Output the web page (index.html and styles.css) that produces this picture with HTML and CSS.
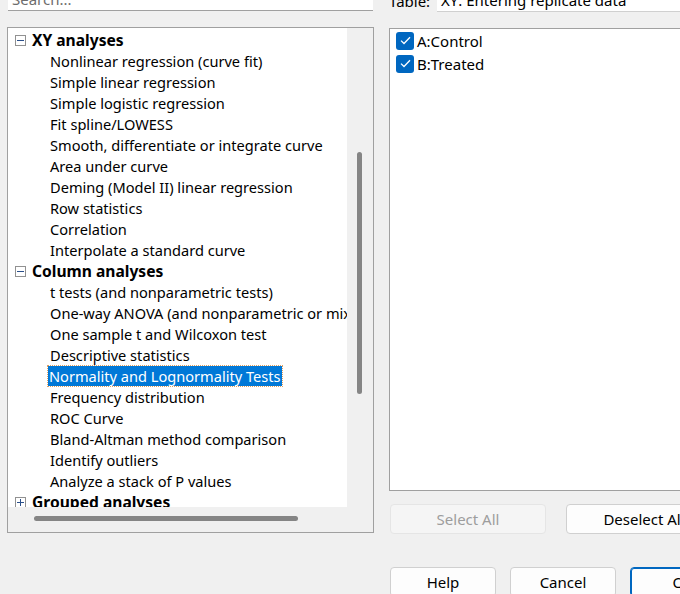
FILE: index.html
```html
<!DOCTYPE html>
<html lang="en">
  <head>
    <meta charset="UTF-8" />
    <title>Analyze Data</title>
    <link rel="stylesheet" href="styles.css">
  </head>
  <body>
    <div class="dialog">
      <div class="left-col">
        <div class="search-box">Search...</div>

        <div class="tree-panel">
          <div class="tree-view">
            <div class="tree-group">
              <span class="expander minus"></span>XY analyses
            </div>
            <div class="tree-item">Nonlinear regression (curve fit)</div>
            <div class="tree-item">Simple linear regression</div>
            <div class="tree-item">Simple logistic regression</div>
            <div class="tree-item">Fit spline/LOWESS</div>
            <div class="tree-item">Smooth, differentiate or integrate curve</div>
            <div class="tree-item">Area under curve</div>
            <div class="tree-item">Deming (Model II) linear regression</div>
            <div class="tree-item">Row statistics</div>
            <div class="tree-item">Correlation</div>
            <div class="tree-item">Interpolate a standard curve</div>
            <div class="tree-group">
              <span class="expander minus"></span>Column analyses
            </div>
            <div class="tree-item">t tests (and nonparametric tests)</div>
            <div class="tree-item">One-way ANOVA (and nonparametric or mixed)</div>
            <div class="tree-item">One sample t and Wilcoxon test</div>
            <div class="tree-item">Descriptive statistics</div>
            <div class="tree-item"><span class="selected">Normality and Lognormality Tests</span></div>
            <div class="tree-item">Frequency distribution</div>
            <div class="tree-item">ROC Curve</div>
            <div class="tree-item">Bland-Altman method comparison</div>
            <div class="tree-item">Identify outliers</div>
            <div class="tree-item">Analyze a stack of P values</div>
            <div class="tree-group">
              <span class="expander plus"></span>Grouped analyses
            </div>
          </div>
          <div class="vscroll">
            <div class="vthumb"></div>
          </div>
          <div class="hscroll">
            <div class="hthumb"></div>
          </div>
          <div class="corner"></div>
        </div>
      </div>

      <div class="right-col">
        <div class="table-row">
          <span class="table-label">Table:</span>
          <div class="table-field">XY: Entering replicate data</div>
        </div>

        <div class="dataset-list">
          <label class="check-row">
            <span class="checkbox">
              <svg width="11" height="9" viewBox="0 0 11 9">
                <path d="M1 4.6 L4 7.5 L10 1.3" fill="none" stroke="#fff" stroke-width="1.3" />
              </svg>
            </span>
            A:Control
          </label>
          <label class="check-row">
            <span class="checkbox">
              <svg width="11" height="9" viewBox="0 0 11 9">
                <path d="M1 4.6 L4 7.5 L10 1.3" fill="none" stroke="#fff" stroke-width="1.3" />
              </svg>
            </span>
            B:Treated
          </label>
        </div>

        <div class="select-buttons">
          <button class="btn" disabled>Select All</button>
          <button class="btn">Deselect All</button>
        </div>

        <div class="dialog-buttons">
          <button class="btn">Help</button>
          <button class="btn">Cancel</button>
          <button class="btn default">OK</button>
        </div>
      </div>
    </div>
  </body>
</html>
```

FILE: styles.css
```css
body {
  margin: 0;
  padding: 0;
  width: 680px;
  height: 594px;
  overflow: hidden;
  background: #f0f0f0;
  font-family: 'Noto Sans', 'Open Sans', sans-serif;
  font-size: 14.6px;
  color: #000;
}

.dialog {
  display: flex;
  gap: 15px;
  padding-left: 7px;
  margin-top: -12px;
  width: 800px;
}

/* left column: search + tree */

.left-col {
  display: flex;
  flex-direction: column;
  gap: 16px;
  width: 367px;
  flex-shrink: 0;
}

.search-box {
  height: 23px;
  box-sizing: border-box;
  margin-left: 1px;
  margin-right: 1px;
  background: #fff;
  border-bottom: 1px solid #a0a0a0;
  color: #6d6d6d;
  line-height: 14px;
  padding: 4px 0 0 4px;
  font-size: 15px;
}

.tree-panel {
  display: grid;
  grid-template-columns: 1fr 26px;
  grid-template-rows: 479px 25px;
  border: 1px solid #a0a0a0;
  height: 504px;
}

.tree-view {
  background: #fff;
  overflow: hidden;
  padding-top: 2px;
  white-space: nowrap;
}

.tree-group,
.tree-item {
  height: 21px;
  line-height: 21px;
}

.tree-group {
  display: flex;
  align-items: center;
  font-weight: bold;
  font-size: 15.6px;
  padding-left: 7px;
}

.tree-item {
  padding-left: 42px;
}

.expander {
  position: relative;
  width: 9px;
  height: 9px;
  border: 1px solid #919191;
  margin-right: 6px;
  flex-shrink: 0;
}

.expander::before {
  content: "";
  position: absolute;
  left: 1px;
  top: 4px;
  width: 7px;
  height: 1px;
  background: #2a4f8a;
}

.expander.plus::after {
  content: "";
  position: absolute;
  left: 4px;
  top: 1px;
  width: 1px;
  height: 7px;
  background: #2a4f8a;
}

.selected {
  display: inline-block;
  background: #0078d7;
  color: #fff;
  outline: 1px dotted #e0a060;
  padding: 0 1px;
  margin-left: -2px;
  line-height: 20px;
}

.vscroll {
  background: #f0f0f0;
  padding-top: 124px;
}

.vthumb {
  width: 5px;
  height: 242px;
  margin-left: 10px;
  border-radius: 3px;
  background: #858585;
}

.hscroll {
  background: #f0f0f0;
  padding-top: 9px;
}

.hthumb {
  width: 264px;
  height: 5px;
  margin-left: 26px;
  border-radius: 3px;
  background: #858585;
}

.corner {
  background: #f0f0f0;
}

/* right column */

.right-col {
  display: flex;
  flex-direction: column;
  width: 400px;
  flex-shrink: 0;
  font-size: 15px;
}

.table-row {
  display: flex;
  align-items: flex-start;
  height: 24px;
  gap: 6px;
}

.table-label {
  line-height: 14px;
  padding-top: 6px;
  width: 42px;
}

.table-field {
  flex: 1;
  background: #fff;
  border-bottom: 1px solid #d0d0d0;
  padding-left: 4px;
  line-height: 14px;
  padding-top: 5px;
  box-sizing: border-box;
  height: 24px;
}

.dataset-list {
  margin-top: 16px;
  height: 463px;
  box-sizing: border-box;
  background: #fff;
  border: 1px solid #a0a0a0;
  padding: 0 0 0 6px;
}

.check-row {
  display: flex;
  align-items: center;
  gap: 3px;
  height: 23px;
}

.checkbox {
  display: flex;
  align-items: center;
  justify-content: center;
  width: 18px;
  height: 18px;
  border-radius: 3px;
  background: #0067c0;
}

.select-buttons {
  display: flex;
  gap: 19px;
  margin-top: 13px;
}

.select-buttons .btn {
  width: 156px;
  height: 30px;
}

.dialog-buttons {
  display: flex;
  gap: 13px;
  margin-top: 33px;
}

.dialog-buttons .btn {
  width: 106px;
  height: 30px;
}

.btn {
  font-family: inherit;
  font-size: 15px;
  color: #000;
  background: #fdfdfd;
  border: 1px solid #d0d0d0;
  border-radius: 4px;
  padding: 0;
  margin-left: 1px;
}

.btn:disabled {
  background: #f5f5f5;
  border-color: #e5e5e5;
  color: #9d9d9d;
}

.btn.default {
  border: 1px solid #0067c0;
  box-shadow: inset 0 0 0 1px #0067c0;
}
```
